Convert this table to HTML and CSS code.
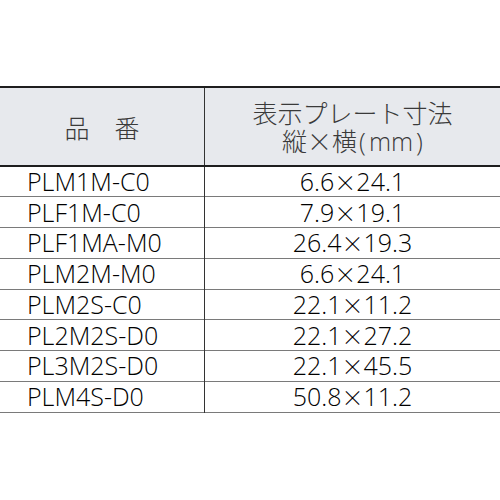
FILE: index.html
```html
<!DOCTYPE html>
<html lang="ja">
<head>
<meta charset="utf-8">
<link rel="stylesheet" href="styles.css">
</head>
<body>
<div class="page">
  <table class="spec">
    <thead>
      <tr>
        <th class="col-name">品　番</th>
        <th class="col-size">表示プレート寸法<br>縦×横<span class="unit"><span class="po">(</span>mm<span class="pc">)</span></span></th>
      </tr>
    </thead>
    <tbody>
      <tr><td class="name">PLM1M-C0</td><td class="size">6.6<span class="x">×</span>24.1</td></tr>
      <tr><td class="name">PLF1M-C0</td><td class="size">7.9<span class="x">×</span>19.1</td></tr>
      <tr><td class="name">PLF1MA-M0</td><td class="size">26.4<span class="x">×</span>19.3</td></tr>
      <tr><td class="name">PLM2M-M0</td><td class="size">6.6<span class="x">×</span>24.1</td></tr>
      <tr><td class="name">PLM2S-C0</td><td class="size">22.1<span class="x">×</span>11.2</td></tr>
      <tr><td class="name">PL2M2S-D0</td><td class="size">22.1<span class="x">×</span>27.2</td></tr>
      <tr><td class="name">PL3M2S-D0</td><td class="size">22.1<span class="x">×</span>45.5</td></tr>
      <tr><td class="name">PLM4S-D0</td><td class="size">50.8<span class="x">×</span>11.2</td></tr>
    </tbody>
  </table>
</div>
</body>
</html>
```
FILE: styles.css
```css
html, body {
  margin: 0;
  padding: 0;
  background: #ffffff;
}
.page {
  padding-top: 86px;
  font-family: "Open Sans", "Noto Sans CJK JP", sans-serif;
  font-weight: 300;
}
.spec {
  width: 500px;
  border-collapse: collapse;
  table-layout: fixed;
}
.spec th,
.spec td {
  padding: 0;
}
.spec thead tr {
  background: #e7e9ed;
  border-top: 2px solid #1e1e1e;
  border-bottom: 2px solid #1e1e1e;
}
.spec th {
  height: 77px;
  font-weight: 300;
  color: #3a3a3a;
  font-size: 25px;
  line-height: 28px;
  text-align: center;
  vertical-align: middle;
}
.col-name {
  width: 204px;
  border-right: 1px solid #333;
  font-family: "Noto Sans CJK JP", sans-serif;
}
.col-size {
  font-family: "Noto Sans CJK JP", sans-serif;
}
.unit {
  font-family: "Open Sans", sans-serif;
  font-weight: 300;
}
.po {
  padding-left: 2px;
  padding-right: 3px;
}
.pc {
  padding-left: 3px;
}
.x {
  font-family: "Noto Sans CJK JP", sans-serif;
  font-weight: 300;
  font-size: 22px;
}
.spec tbody tr {
  height: 30.75px;
  border-bottom: 1px solid #7a7a7a;
}
.spec td {
  font-size: 25px;
  line-height: 29px;
  color: #000;
  vertical-align: middle;
}
.name {
  padding-left: 27px !important;
  text-align: left;
  border-right: 1px solid #333;
}
.size {
  text-align: center;
}
```
